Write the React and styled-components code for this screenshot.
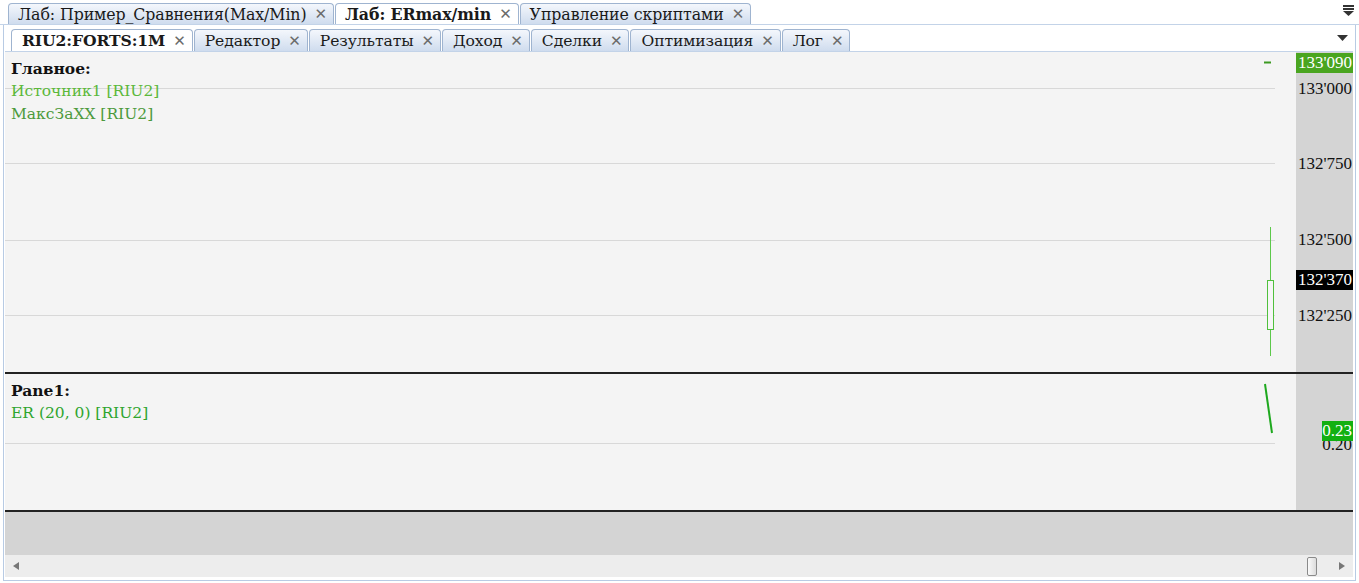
import React from 'react'
import styled, { createGlobalStyle } from 'styled-components'

const Global = createGlobalStyle`
  html, body { margin: 0; padding: 0; background: #fff; }
  body { width: 1359px; height: 583px; overflow: hidden; font-family: "DejaVu Serif", "Liberation Serif", serif; }
`

const Window = styled.div`
  width: 1359px;
  height: 583px;
  display: flex;
  flex-direction: column;
  background: #fff;
`

const TabStrip = styled.div`
  display: flex;
  align-items: flex-end;
  flex-shrink: 0;
  height: ${p => p.$h}px;
  padding-left: ${p => p.$pad}px;
  padding-top: ${p => p.$top}px;
  border-bottom: 1px solid #c3d3e8;
  position: relative;
`

const Tab = styled.div`
  display: flex;
  align-items: center;
  height: ${p => p.$h}px;
  padding: 0 6px 0 ${p => p.$padl}px;
  margin-right: 1px;
  border: 1px solid #9fb4d0;
  border-bottom: none;
  border-radius: 4px 4px 0 0;
  font-size: ${p => p.$fs}px;
  letter-spacing: -0.1px;
  color: #1a1a1a;
  white-space: nowrap;
  background: ${p => (p.$active ? '#fff' : 'linear-gradient(#f4f7fc, #cfdcee)')};
  font-weight: ${p => (p.$active ? 'bold' : 'normal')};
  box-sizing: border-box;
`

const Close = styled.span`
  margin-left: 8px;
  color: #6b6b6b;
  font-family: "DejaVu Sans", sans-serif;
  font-size: 15px;
  font-weight: normal;
`

const DropArrow = styled.div`
  position: absolute;
  right: 5px;
  top: ${p => p.$top}px;
  display: flex;
`

const Frame = styled.div`
  flex: 1;
  margin: 0 3px 2px 3px;
  border: 1px solid #b8cbe4;
  border-top: none;
  display: flex;
  flex-direction: column;
  padding: 1px 2px 1px 1px;
`

const Pane = styled.div`
  display: flex;
  flex-shrink: 0;
  height: ${p => p.$h}px;
  border-bottom: 2px solid #222;
`

const Plot = styled.div`
  flex: 1;
  position: relative;
  background: #f4f4f4;
  overflow: hidden;
`

const Axis = styled.div`
  width: 57px;
  background: #d4d4d4;
  position: relative;
  font-family: "Liberation Serif", serif;
  font-size: 17px;
  color: #111;
`

const AxisLabel = styled.div`
  position: absolute;
  left: 0;
  right: 0;
  top: ${p => p.$y}px;
  height: 20px;
  line-height: 20px;
  text-align: right;
  padding-right: 1px;
  color: ${p => (p.$bg ? '#fff' : '#111')};
  background: ${p => p.$bg || 'transparent'};
  ${p => p.$left && `left: ${p.$left}px;`}
`

const Legend = styled.div`
  position: absolute;
  left: 6px;
  top: ${p => p.$top}px;
  font-size: 15.5px;
  line-height: 23px;
`

const LegendTitle = styled.div`
  font-weight: bold;
  color: #111;
`

const LegendItem = styled.div`
  color: ${p => p.$c};
`

const Grid = styled.svg`
  position: absolute;
  left: 0;
  top: 0;
`

const Empty = styled.div`
  height: 43px;
  flex-shrink: 0;
  background: #d4d4d4;
`

const Scroll = styled.div`
  height: 22px;
  flex-shrink: 0;
  background: #ededed;
  display: flex;
  align-items: center;
  justify-content: space-between;
  padding: 0 8px;
`

const Thumb = styled.div`
  width: 8px;
  height: 17px;
  border: 1px solid #8a8a8a;
  border-radius: 2px;
  background: linear-gradient(90deg, #fafafa, #dcdcdc);
  margin-left: auto;
  margin-right: 22px;
`

const topTabs = [
  { t: 'Лаб: Пример_Сравнения(Max/Min)' },
  { t: 'Лаб: ERmax/min', active: true },
  { t: 'Управление скриптами' },
]
const subTabs = [
  { t: 'RIU2:FORTS:1M', active: true },
  { t: 'Редактор' },
  { t: 'Результаты' },
  { t: 'Доход' },
  { t: 'Сделки' },
  { t: 'Оптимизация' },
  { t: 'Лог' },
]

const Tri = ({ dir }) => (
  <svg width="6" height="8" viewBox="0 0 6 8">
    {dir === 'l' ? <path d="M6 0 L0 4 L6 8 Z" fill="#777" /> : <path d="M0 0 L6 4 L0 8 Z" fill="#777" />}
  </svg>
)

export default function App() {
  return (
    <Window>
      <Global />
      <TabStrip $h={21} $pad={8} $top={3}>
        {topTabs.map(x => (
          <Tab key={x.t} $active={x.active} $h={21} $padl={9} $fs={15.8}>
            {x.t}
            <Close>✕</Close>
          </Tab>
        ))}
        <DropArrow $top={5}>
          <svg width="11" height="12" viewBox="0 0 11 12">
            <rect x="0" y="0" width="11" height="2" fill="#333" />
            <rect x="0" y="3" width="11" height="2" fill="#333" />
            <path d="M0 6 L11 6 L5.5 11 Z" fill="#333" />
          </svg>
        </DropArrow>
      </TabStrip>
      <Frame>
        <TabStrip $h={22} $pad={6} $top={3}>
          {subTabs.map(x => (
            <Tab key={x.t} $active={x.active} $h={22} $padl={10} $fs={15.6}>
              {x.t}
              <Close>✕</Close>
            </Tab>
          ))}
          <DropArrow $top={9}>
            <svg width="11" height="6" viewBox="0 0 11 6">
              <path d="M0 0 L11 0 L5.5 6 Z" fill="#333" />
            </svg>
          </DropArrow>
        </TabStrip>
        <Pane $h={320}>
          <Plot>
            <Grid width="1290" height="320">
              {[36, 111, 188, 263].map(y => (
                <line key={y} x1="0" x2="1270" y1={y + 0.5} y2={y + 0.5} stroke="#d8d8d8" />
              ))}
              <line x1="1259" x2="1266" y1="10.5" y2="10.5" stroke="#3c9a22" strokeWidth="2" />
              <line x1="1265.5" x2="1265.5" y1="175" y2="304" stroke="#5cc84a" />
              <rect x="1262.5" y="228.5" width="6" height="49" fill="#f6f6f6" stroke="#4fc03c" />
            </Grid>
            <Legend $top={5}>
              <LegendTitle>Главное:</LegendTitle>
              <LegendItem $c="#5bb83a">Источник1 [RIU2]</LegendItem>
              <LegendItem $c="#4c9a3c">МаксЗаXX [RIU2]</LegendItem>
            </Legend>
          </Plot>
          <Axis>
            <AxisLabel $y={1} $bg="#4aa520">133'090</AxisLabel>
            <AxisLabel $y={27}>133'000</AxisLabel>
            <AxisLabel $y={102}>132'750</AxisLabel>
            <AxisLabel $y={178}>132'500</AxisLabel>
            <AxisLabel $y={218} $bg="#000">132'370</AxisLabel>
            <AxisLabel $y={254}>132'250</AxisLabel>
          </Axis>
        </Pane>
        <Pane $h={136}>
          <Plot>
            <Grid width="1290" height="136">
              <line x1="0" x2="1270" y1="69.5" y2="69.5" stroke="#d8d8d8" />
              <line x1="1260" x2="1267" y1="10" y2="59" stroke="#1ea81e" strokeWidth="2" />
            </Grid>
            <Legend $top={5}>
              <LegendTitle>Pane1:</LegendTitle>
              <LegendItem $c="#2ea52e">ER (20, 0) [RIU2]</LegendItem>
            </Legend>
          </Plot>
          <Axis>
            <AxisLabel $y={61}>0.20</AxisLabel>
            <AxisLabel $y={47} $left={26} $bg="#12b012">0.23</AxisLabel>
          </Axis>
        </Pane>
        <Empty />
        <Scroll>
          <Tri dir="l" />
          <Thumb />
          <Tri dir="r" />
        </Scroll>
      </Frame>
    </Window>
  )
}
